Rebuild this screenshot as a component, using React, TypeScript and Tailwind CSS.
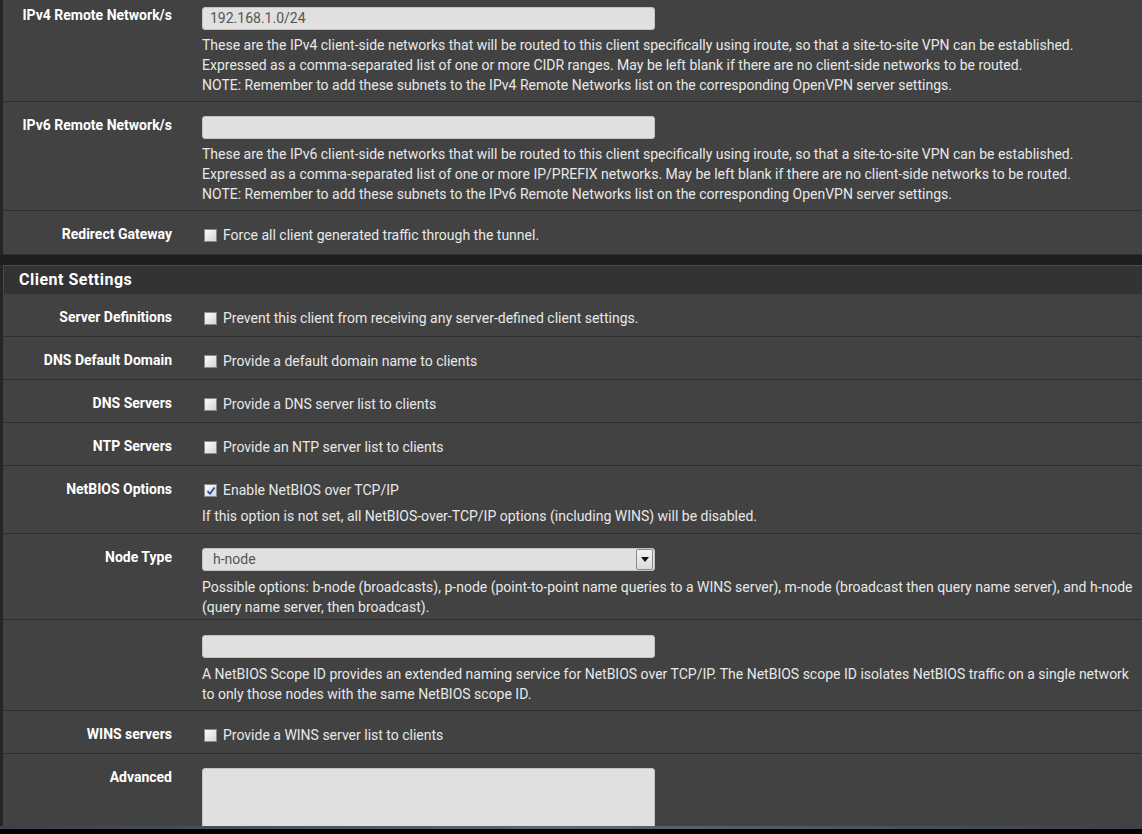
import React from 'react';

// Dark pfSense-style OpenVPN client form
const Checkbox = ({ checked }: { checked?: boolean }) => (
  <span className="ml-[2px] flex h-[13px] w-[13px] shrink-0 items-center justify-center border border-[#8a8a8a] bg-gradient-to-br from-[#fdfdfd] to-[#d4d4d4]">
    {checked && (
      <svg viewBox="0 0 10 10" className="h-[10px] w-[10px]">
        <path d="M1.5 5.2 L4 7.8 L8.6 1.6" fill="none" stroke="#2b3fa8" strokeWidth="1.7" />
      </svg>
    )}
  </span>
);

const Row = ({
  label,
  children,
  className = 'pt-[14px] pb-[7px]',
}: {
  label?: string;
  children: React.ReactNode;
  className?: string;
}) => (
  <div className={`flex border-b border-[#2f2f2f] ${className}`}>
    <div className="w-[169px] shrink-0 text-right text-[14px] font-bold leading-[19px] text-white">
      {label}
    </div>
    <div className="ml-[30px] min-w-0 flex-1 pr-2">{children}</div>
  </div>
);

const TextInput = ({ value }: { value?: string }) => (
  <div className="flex h-[23px] w-[453px] items-center rounded-[3px] border border-[#c4c4c4] bg-[#e0e0e0] px-[7px] text-[14px] text-[#555]">
    {value}
  </div>
);

const Help = ({ children, className = 'mt-[5px]' }: { children: React.ReactNode; className?: string }) => (
  <div className={`whitespace-nowrap text-[14px] leading-[20px] text-[#e8e8e8] ${className}`}>{children}</div>
);

const CheckLine = ({ text, checked }: { text: string; checked?: boolean }) => (
  <div className="flex h-[21px] items-center gap-[6px] text-[14px] text-[#e8e8e8]">
    <Checkbox checked={checked} />
    <span>{text}</span>
  </div>
);

export default function App() {
  return (
    <div className="flex h-[834px] flex-col overflow-hidden bg-[#262626] font-['Roboto','Liberation_Sans',sans-serif]">
      <div className="min-h-0 flex-1 overflow-hidden">
        <div className="ml-[3px] bg-[#424242]">
          <Row label="IPv4 Remote Network/s" className="pt-[6px] pb-[6px]">
            <div className="pt-px">
              <TextInput value="192.168.1.0/24" />
            </div>
            <Help>
              These are the IPv4 client-side networks that will be routed to this client specifically using iroute, so that a site-to-site VPN can be established.
              <br />
              Expressed as a comma-separated list of one or more CIDR ranges. May be left blank if there are no client-side networks to be routed.
              <br />
              NOTE: Remember to add these subnets to the IPv4 Remote Networks list on the corresponding OpenVPN server settings.
            </Help>
          </Row>
          <Row label="IPv6 Remote Network/s" className="pt-[14px] pb-[6px]">
            <TextInput />
            <Help>
              These are the IPv6 client-side networks that will be routed to this client specifically using iroute, so that a site-to-site VPN can be established.
              <br />
              Expressed as a comma-separated list of one or more IP/PREFIX networks. May be left blank if there are no client-side networks to be routed.
              <br />
              NOTE: Remember to add these subnets to the IPv6 Remote Networks list on the corresponding OpenVPN server settings.
            </Help>
          </Row>
          <Row label="Redirect Gateway" className="pt-[14px] pb-[8px]">
            <CheckLine text="Force all client generated traffic through the tunnel." />
          </Row>
        </div>

        <div className="h-[10px] bg-[#1e1e1e]" />

        <div className="ml-[3px] flex h-[29px] items-center border-t border-l border-[#4a4a4a] bg-[#333333] pl-[15px] text-[16px] font-bold tracking-[0.5px] text-white">
          Client Settings
        </div>

        <div className="ml-[3px] bg-[#424242]">
          <Row label="Server Definitions">
            <CheckLine text="Prevent this client from receiving any server-defined client settings." />
          </Row>
          <Row label="DNS Default Domain">
            <CheckLine text="Provide a default domain name to clients" />
          </Row>
          <Row label="DNS Servers">
            <CheckLine text="Provide a DNS server list to clients" />
          </Row>
          <Row label="NTP Servers">
            <CheckLine text="Provide an NTP server list to clients" />
          </Row>
          <Row label="NetBIOS Options">
            <CheckLine text="Enable NetBIOS over TCP/IP" checked />
            <Help>
              If this option is not set, all NetBIOS-over-TCP/IP options (including WINS) will be disabled.
            </Help>
          </Row>
          <Row label="Node Type" className="pt-[14px] pb-[2px]">
            <div className="flex h-[23px] w-[453px] items-center justify-between rounded-[3px] border border-[#c4c4c4] bg-[#e0e0e0] pl-[10px] pr-px text-[14px] text-[#555]">
              <span>h-node</span>
              <span className="flex h-[21px] w-[17px] items-center justify-center rounded-[2px] border border-[#8a8a8a] bg-gradient-to-b from-[#f2f2f2] to-[#dcdcdc]">
                <svg viewBox="0 0 8 5" className="h-[5px] w-[8px]">
                  <path d="M0 0 H8 L4 5 Z" fill="#111" />
                </svg>
              </span>
            </div>
            <Help className="mt-[6px]">
              Possible options: b-node (broadcasts), p-node (point-to-point name queries to a WINS server), m-node (broadcast then query name server), and h-node
              <br />
              (query name server, then broadcast).
            </Help>
          </Row>
          <Row className="pt-[15px] pb-[6px]">
            <TextInput />
            <Help className="mt-[6px]">
              A NetBIOS Scope ID provides an extended naming service for NetBIOS over TCP/IP. The NetBIOS scope ID isolates NetBIOS traffic on a single network
              <br />
              to only those nodes with the same NetBIOS scope ID.
            </Help>
          </Row>
          <Row label="WINS servers">
            <CheckLine text="Provide a WINS server list to clients" />
          </Row>
          <Row label="Advanced">
            <div className="h-[110px] w-[453px] rounded-[3px] border border-[#c4c4c4] bg-[#e0e0e0]" />
          </Row>
        </div>
      </div>
      <div className="h-[3px] bg-gradient-to-r from-[#3b414a] via-[#5d6978] to-[#3b414a]" />
      <div className="h-[5px] bg-black" />
    </div>
  );
}
